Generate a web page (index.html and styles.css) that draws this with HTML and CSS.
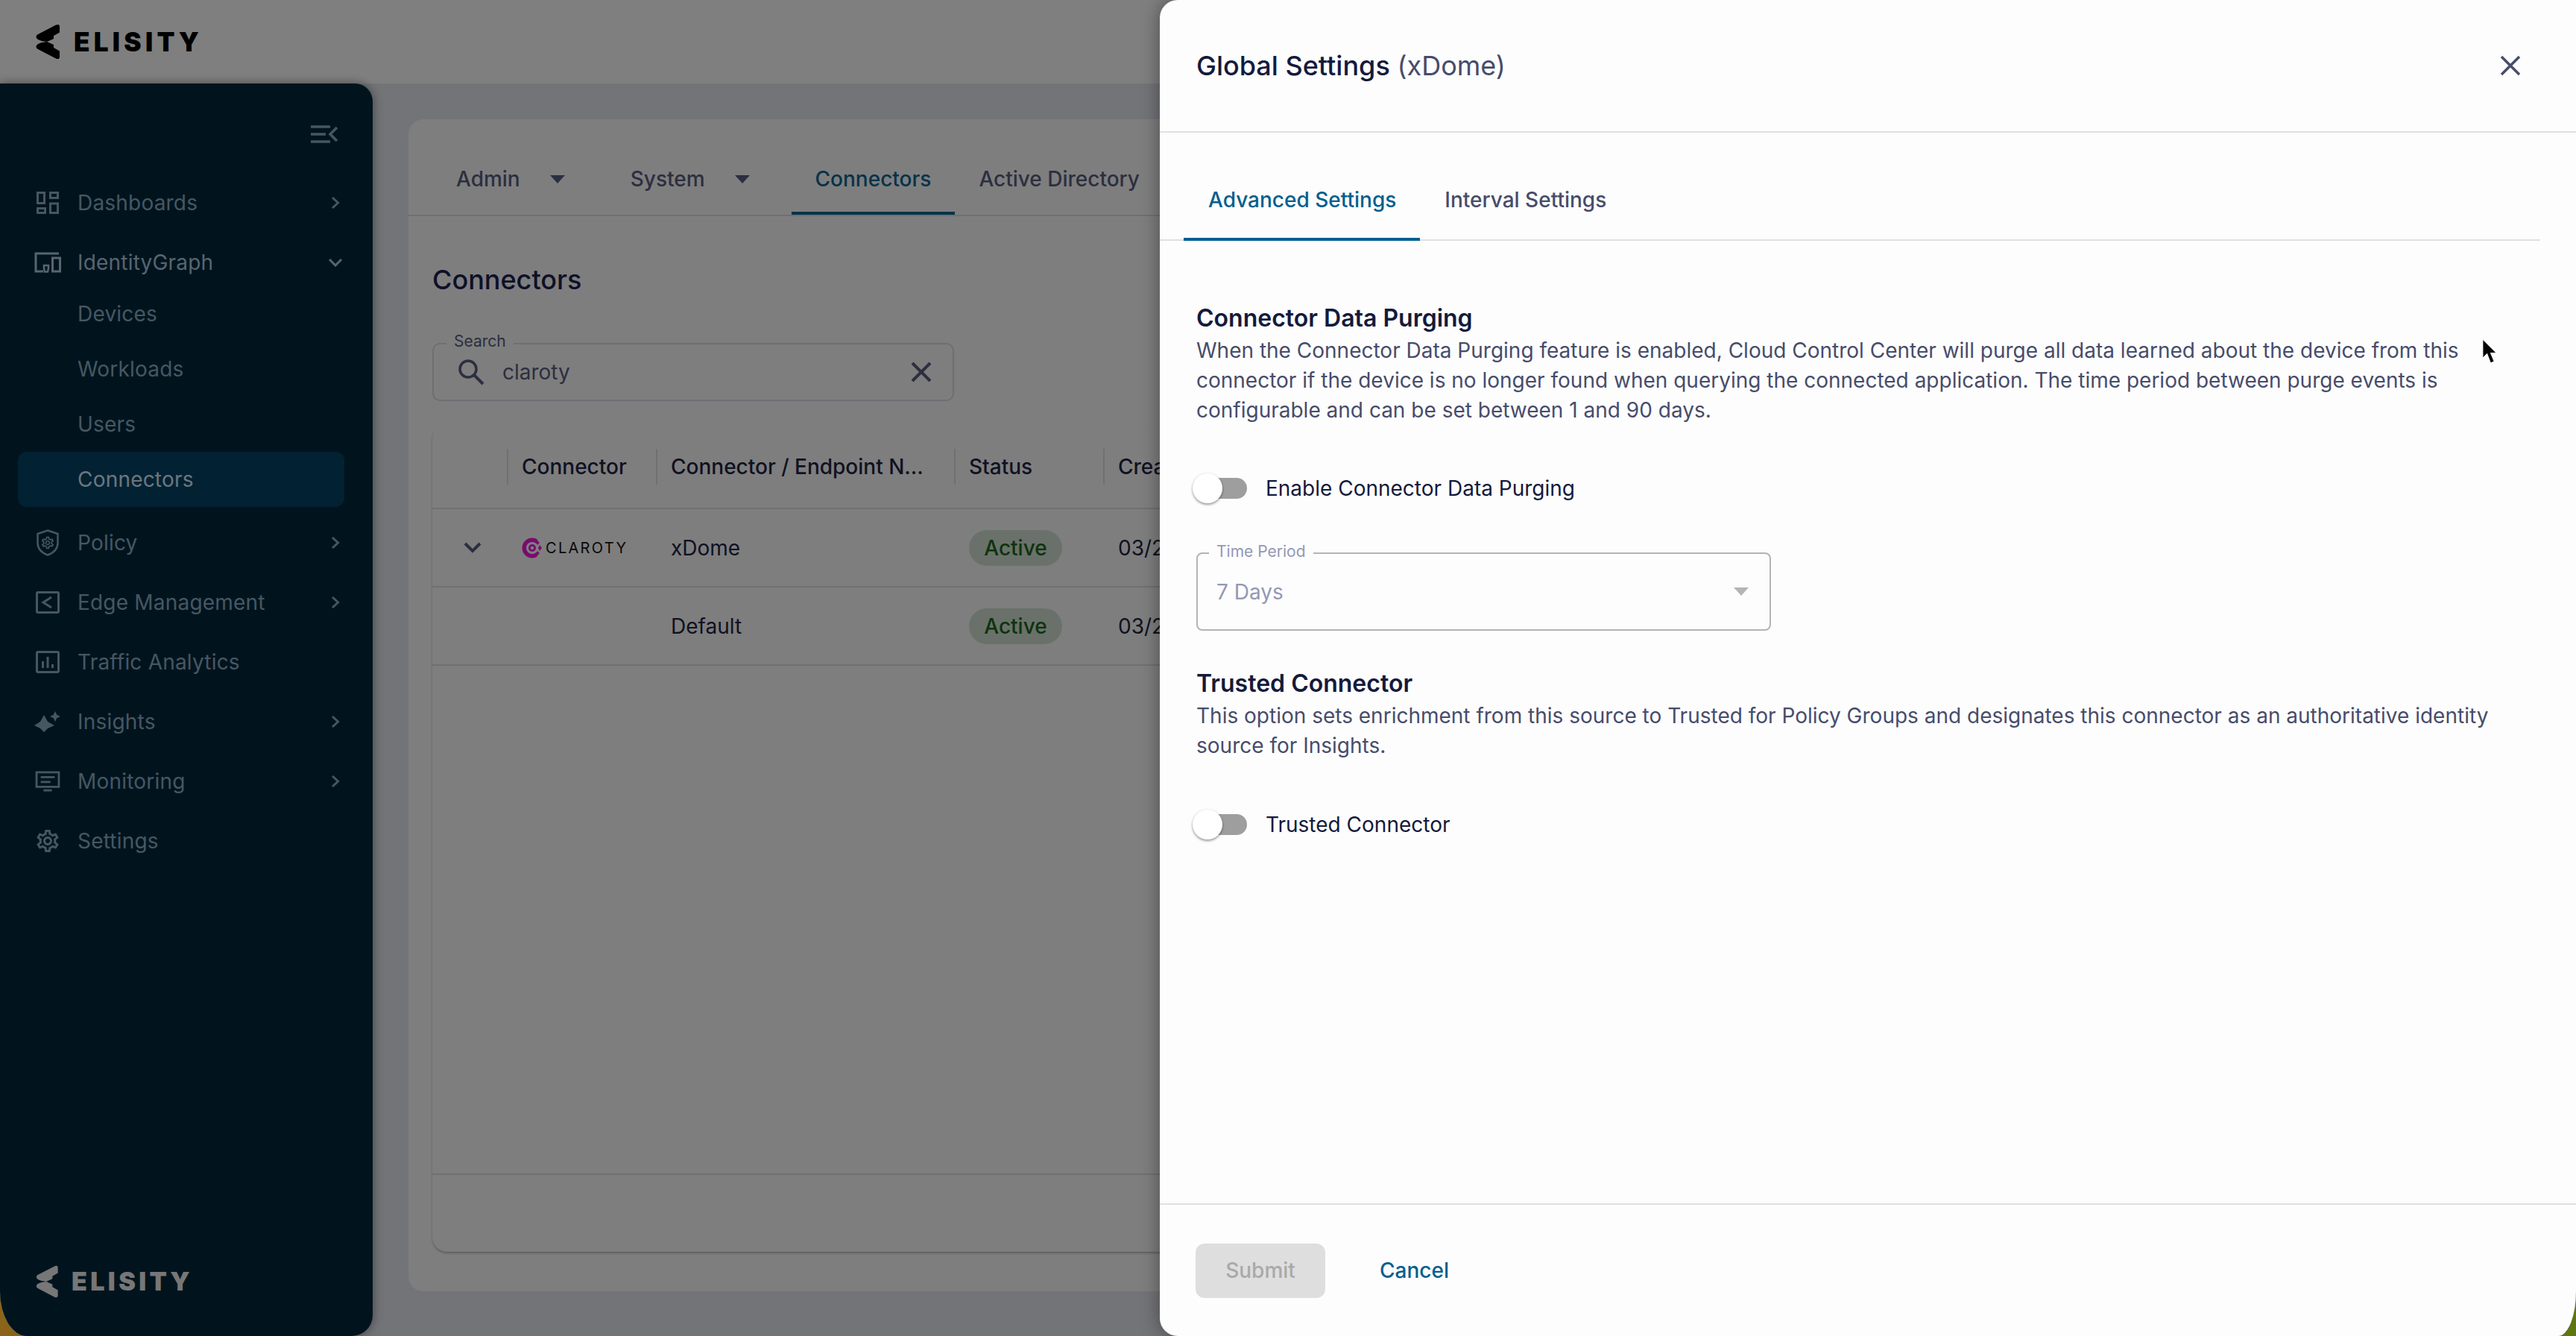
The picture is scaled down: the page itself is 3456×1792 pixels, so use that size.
FILE: index.html
```html
<!DOCTYPE html>
<html lang="en">

<head>
    <meta charset="UTF-8">
    <title>Connectors - Global Settings</title>
    <link rel="stylesheet" href="styles.css">
</head>

<body>
    <svg class="defs" aria-hidden="true">
        <symbol id="logo-mark" viewBox="0 0 32 48">
            <path d="M27 1.500Q32-.5 32 4v7.500L24 16v4l-9 4-7-1-5-2q-4.500-3-1-6.500z" fill="currentColor"/>
            <path d="M3 27l5-2 7-1 9 4v4l8 4.500V44q0 4.500-5 2.500L2 33.500Q-1.500 30 3 27z" fill="currentColor"/>
        </symbol>
        <symbol id="chev-right" viewBox="0 0 12 18">
            <path d="M2 2l7.500 7L2 16" fill="none" stroke="currentColor" stroke-width="3"/>
        </symbol>
        <symbol id="gear" viewBox="0 0 24 24">
            <path fill="currentColor" d="M19.430 12.980c.04-.32.07-.64.07-.98 0-.34-.03-.66-.07-.98l2.110-1.650c.19-.15.24-.42.12-.64l-2-3.460c-.09-.16-.26-.25-.44-.25-.06 0-.12.01-.17.03l-2.490 1c-.52-.4-1.080-.73-1.690-.98l-.38-2.650C14.460 2.180 14.250 2 14 2h-4c-.25 0-.46.18-.49.42l-.38 2.650c-.61.25-1.170.59-1.690.98l-2.490-1c-.06-.02-.12-.03-.18-.03-.17 0-.34.09-.43.25l-2 3.460c-.13.22-.07.49.12.64l2.110 1.650c-.04.32-.07.65-.07.98 0 .33.03.66.07.98l-2.110 1.650c-.19.15-.24.42-.12.64l2 3.460c.09.16.26.25.44.25.06 0 .12-.01.17-.03l2.490-1c.52.4 1.080.73 1.690.98l.38 2.650c.03.24.24.42.49.42h4c.25 0 .46-.18.49-.42l.38-2.650c.61-.25 1.170-.59 1.690-.98l2.490 1c.06.02.12.03.18.03.17 0 .34-.09.43-.25l2-3.460c.12-.22.07-.49-.12-.64l-2.110-1.650zm-1.980-1.710c.04.31.05.52.05.73 0 .21-.02.43-.05.73l-.14 1.130.89.7 1.080.84-.7 1.210-1.270-.51-1.040-.42-.9.68c-.43.32-.84.56-1.250.73l-1.060.43-.16 1.130-.2 1.350h-1.400l-.19-1.350-.16-1.130-1.060-.43c-.43-.18-.83-.41-1.230-.71l-.91-.7-1.060.43-1.270.51-.7-1.210 1.080-.84.89-.7-.14-1.130c-.03-.31-.05-.54-.05-.74s.02-.43.05-.73l.14-1.130-.89-.7-1.080-.84.7-1.210 1.270.51 1.040.42.9-.68c.43-.32.84-.56 1.250-.73l1.060-.43.16-1.130.2-1.350h1.390l.19 1.350.16 1.130 1.060.43c.43.18.83.41 1.230.71l.91.7 1.060-.43 1.270-.51.7 1.210-1.070.85-.89.7.14 1.130zM12 8c-2.210 0-4 1.790-4 4s1.790 4 4 4 4-1.790 4-4-1.790-4-4-4zm0 6c-1.100 0-2-.9-2-2s.9-2 2-2 2 .9 2 2-.9 2-2 2z"/>
        </symbol>
    </svg>

    <div class="app">
        <header class="topbar">
            <div class="brand brand-top">
                <svg class="brand-mark"><use href="#logo-mark"/></svg>
                <span class="brand-name">ELISITY</span>
            </div>
        </header>

        <div class="workspace">
            <!-- Sidebar -->
            <aside class="sidebar">
                <div class="collapse-row">
                    <svg class="collapse-icon" viewBox="0 0 36 24">
                        <path d="M0 2h26M0 12h20M0 22h26M35 3 26 12l9 9" fill="none" stroke="currentColor" stroke-width="3.500"/>
                    </svg>
                </div>

                <nav class="nav">
                    <a class="nav-item">
                        <span class="nav-icon">
                            <svg class="icon-30" viewBox="0 0 30 30"><path d="M1.500 1.500h9v14h-9zM18.500 1.500h10v7h-10zM1.500 22.500h10v6h-10zM18.500 16h10v12.500h-10z" fill="none" stroke="currentColor" stroke-width="3"/></svg>
                        </span>
                        <span class="nav-label">Dashboards</span>
                        <svg class="nav-chev"><use href="#chev-right"/></svg>
                    </a>
                    <a class="nav-item nav-open">
                        <span class="nav-icon">
                            <svg class="icon-36" viewBox="0 0 36 28"><path d="M33 2H2v24h10M24.500 8h10v18h-10z" fill="none" stroke="currentColor" stroke-width="3"/><path d="M13 18h6v4l-1 4.500h-4l-1-4.500z" fill="none" stroke="currentColor" stroke-width="2.500"/></svg>
                        </span>
                        <span class="nav-label">IdentityGraph</span>
                        <svg class="nav-chev-down" viewBox="0 0 18 11"><path d="M1 1l8 8 8-8" fill="none" stroke="currentColor" stroke-width="3"/></svg>
                    </a>
                    <div class="nav-sub">
                        <a class="sub-item">Devices</a>
                        <a class="sub-item">Workloads</a>
                        <a class="sub-item">Users</a>
                        <a class="sub-item sub-active">Connectors</a>
                    </div>
                    <a class="nav-item">
                        <span class="nav-icon">
                            <svg class="icon-shield" viewBox="0 0 30 36">
                                <path d="M15 1.500 28.500 6v12c0 8-5.500 13.500-13.500 16.500C7 31.500 1.500 26 1.500 18V6z" fill="none" stroke="currentColor" stroke-width="2.500"/>
                                <use href="#gear" x="5" y="8" width="20" height="20"/>
                            </svg>
                        </span>
                        <span class="nav-label">Policy</span>
                        <svg class="nav-chev"><use href="#chev-right"/></svg>
                    </a>
                    <a class="nav-item">
                        <span class="nav-icon">
                            <svg class="icon-32" viewBox="0 0 32 30">
                                <rect x="1.500" y="1.500" width="29" height="27" rx="1.500" fill="none" stroke="currentColor" stroke-width="3"/>
                                <path d="M21 8l-11 7 11 7" fill="none" stroke="currentColor" stroke-width="3"/>
                            </svg>
                        </span>
                        <span class="nav-label">Edge Management</span>
                        <svg class="nav-chev"><use href="#chev-right"/></svg>
                    </a>
                    <a class="nav-item">
                        <span class="nav-icon">
                            <svg class="icon-32" viewBox="0 0 32 30">
                                <rect x="1.500" y="1.500" width="29" height="27" rx="1.500" fill="none" stroke="currentColor" stroke-width="3"/>
                                <path d="M9.500 14v9M16 8v15M22.500 18v5" fill="none" stroke="currentColor" stroke-width="3"/>
                            </svg>
                        </span>
                        <span class="nav-label">Traffic Analytics</span>
                    </a>
                    <a class="nav-item">
                        <span class="nav-icon">
                            <svg class="icon-36" viewBox="0 0 36 28">
                                <path d="M13 5l5 9 9 5-9 4-5 5-5-5-8-4 8-5zM28 0l2.200 4.800L35 7l-4.800 2.200L28 14l-2.200-4.800L21 7l4.800-2.200z" fill="currentColor"/>
                            </svg>
                        </span>
                        <span class="nav-label">Insights</span>
                        <svg class="nav-chev"><use href="#chev-right"/></svg>
                    </a>
                    <a class="nav-item">
                        <span class="nav-icon">
                            <svg class="icon-36" viewBox="0 0 36 30">
                                <path d="M2 2h32v21H2zM12 28h12M8 9h20M8 16h14" fill="none" stroke="currentColor" stroke-width="3"/>
                            </svg>
                        </span>
                        <span class="nav-label">Monitoring</span>
                        <svg class="nav-chev"><use href="#chev-right"/></svg>
                    </a>
                    <a class="nav-item">
                        <span class="nav-icon">
                            <svg class="icon-gear"><use href="#gear"/></svg>
                        </span>
                        <span class="nav-label">Settings</span>
                    </a>
                </nav>

                <div class="brand brand-bottom">
                    <svg class="brand-mark"><use href="#logo-mark"/></svg>
                    <span class="brand-name">ELISITY</span>
                </div>
            </aside>

            <!-- Connectors page -->
            <main class="page">
                <div class="card">
                    <div class="page-tabs">
                        <a class="page-tab tab-menu">Admin<i class="caret"></i></a>
                        <a class="page-tab tab-menu">System<i class="caret"></i></a>
                        <a class="page-tab page-tab-active">Connectors</a>
                        <a class="page-tab">Active Directory</a>
                    </div>

                    <div class="card-body">
                        <h2 class="page-title">Connectors</h2>

                        <div class="search">
                            <span class="search-label">Search</span>
                            <svg class="search-icon" viewBox="0 0 36 36">
                                <circle cx="14" cy="14" r="11" fill="none" stroke="currentColor" stroke-width="3.500"/>
                                <path d="M22 22l12 12" fill="none" stroke="currentColor" stroke-width="4"/>
                            </svg>
                            <span class="search-value">claroty</span>
                            <svg class="search-clear" viewBox="0 0 28 28">
                                <path d="M2 2l24 24M26 2 2 26" fill="none" stroke="currentColor" stroke-width="4"/>
                            </svg>
                        </div>

                        <div class="table">
                            <div class="table-row table-head">
                                <div class="cell"></div>
                                <div class="cell"><span class="head-cell">Connector</span></div>
                                <div class="cell"><span class="head-cell">Connector / Endpoint N...</span></div>
                                <div class="cell"><span class="head-cell">Status</span></div>
                                <div class="cell"><span class="head-cell">Created</span></div>
                            </div>
                            <div class="table-row">
                                <div class="cell cell-toggle">
                                    <svg class="row-chev" viewBox="0 0 24 15"><path d="M2 2l10 10L22 2" fill="none" stroke="currentColor" stroke-width="4"/></svg>
                                </div>
                                <div class="cell cell-pad claroty">
                                    <svg class="claroty-mark" viewBox="0 0 28 28">
                                        <circle cx="14" cy="14" r="13.500" fill="currentColor"/>
                                        <circle cx="14" cy="14" r="8" fill="#fff"/>
                                        <circle cx="14" cy="14" r="5" fill="currentColor"/>
                                        <circle cx="14" cy="14" r="2.200" fill="#fff"/>
                                        <path d="M20 2l2 3-3 8 3 1-3 1 3 8-2 3h8V2z" fill="#fff"/>
                                        <path d="M19 3l5 4-3 3zM24 10l3 4-3 4-2-4zM21 18l3 3-5 4z" fill="currentColor"/>
                                    </svg>
                                    <span class="claroty-name">CLAROTY</span>
                                </div>
                                <div class="cell cell-pad">xDome</div>
                                <div class="cell cell-pad"><span class="chip">Active</span></div>
                                <div class="cell cell-pad">03/2</div>
                            </div>
                            <div class="table-row">
                                <div class="cell"></div>
                                <div class="cell"></div>
                                <div class="cell cell-pad">Default</div>
                                <div class="cell cell-pad"><span class="chip">Active</span></div>
                                <div class="cell cell-pad">03/2</div>
                            </div>
                            <div class="table-foot"></div>
                        </div>
                    </div>
                </div>
            </main>
        </div>

        <div class="scrim"></div>

        <!-- Global settings drawer -->
        <section class="drawer">
            <div class="drawer-head">
                <h1 class="drawer-title">Global Settings <span class="drawer-sub">(xDome)</span></h1>
                <svg class="drawer-close" viewBox="0 0 28 28">
                    <path d="M2 2l24 24M26 2 2 26" fill="none" stroke="currentColor" stroke-width="3.500"/>
                </svg>
            </div>

            <div class="drawer-tabs">
                <a class="drawer-tab drawer-tab-active">Advanced Settings</a>
                <a class="drawer-tab">Interval Settings</a>
            </div>

            <div class="drawer-body">
                <h3 class="section-title">Connector Data Purging</h3>
                <p class="section-text">When the Connector Data Purging feature is enabled, Cloud Control Center will purge all data learned about the device from this connector if the device is no longer found when querying the connected application. The time period between purge events is configurable and can be set between 1 and 90 days.</p>

                <label class="switch-row">
                    <span class="switch"><span class="switch-knob"></span></span>
                    <span class="switch-label">Enable Connector Data Purging</span>
                </label>

                <div class="select">
                    <span class="select-label">Time Period</span>
                    <span class="select-value">7 Days</span>
                    <i class="select-caret"></i>
                </div>

                <h3 class="section-title section-second">Trusted Connector</h3>
                <p class="section-text">This option sets enrichment from this source to Trusted for Policy Groups and designates this connector as an authoritative identity source for Insights.</p>

                <label class="switch-row switch-last">
                    <span class="switch"><span class="switch-knob"></span></span>
                    <span class="switch-label">Trusted Connector</span>
                </label>
            </div>

            <div class="drawer-foot">
                <button class="btn-submit" disabled>Submit</button>
                <button class="btn-cancel">Cancel</button>
            </div>
        </section>

        <svg class="cursor" viewBox="0 0 22 36">
            <path d="M2 1v26l6-6 5 13 5-2-5-12h8z" fill="#000" stroke="#fff" stroke-width="1"/>
        </svg>
    </div>
</body>

</html>
```

FILE: styles.css
```css
* {
    margin: 0;
    padding: 0;
    box-sizing: border-box;
}

html {
    height: 100%;
    background: linear-gradient(90deg, #8a6418 0%, #8a6418 50%, #5f7510 50%, #5f7510 100%);
}

body {
    height: 100%;
    font-family: 'Inter', 'Liberation Sans', sans-serif;
    font-size: 28px;
    color: #474c6b;
    overflow: hidden;
}

.defs {
    position: absolute;
    width: 0;
    height: 0;
}

.app {
    position: relative;
    height: 100vh;
    display: flex;
    flex-direction: column;
    background: #e6e8f0;
    overflow: hidden;
    border-radius: 0 0 24px 36px / 0 0 60px 60px;
}

/* Top bar */
.topbar {
    height: 112px;
    flex: none;
    display: flex;
    align-items: center;
    padding-left: 48px;
    background: #fff;
}

.brand {
    display: flex;
    align-items: center;
}

.brand-top {
    color: #000;
}

.brand-mark {
    width: 32px;
    height: 48px;
    flex: none;
}

.brand-name {
    font-weight: 900;
    font-size: 35px;
    line-height: 1;
    letter-spacing: 5.3px;
}

.brand-top .brand-name {
    margin-left: 19px;
}

.brand-bottom {
    margin-top: auto;
    margin-left: 48px;
    margin-bottom: 51px;
    color: #efefef;
}

.brand-bottom .brand-mark {
    width: 30px;
    height: 44px;
}

.brand-bottom .brand-name {
    font-size: 34px;
    letter-spacing: 4.4px;
    margin-left: 18px;
}

.workspace {
    flex: 1;
    display: flex;
    min-height: 0;
}

/* Sidebar */
.sidebar {
    width: 500px;
    flex: none;
    display: flex;
    flex-direction: column;
    padding-top: 56px;
    background: #02283c;
    color: #8daec4;
    letter-spacing: 0.2px;
    border-radius: 0 24px 28px 0;
    box-shadow: 0 0 14px rgba(0, 0, 0, 0.45);
    z-index: 1;
}

.collapse-row {
    height: 24px;
    margin-bottom: 46px;
    display: flex;
    justify-content: flex-end;
    padding-right: 47px;
}

.collapse-icon {
    width: 36px;
    height: 24px;
}

.nav {
    display: flex;
    flex-direction: column;
}

.nav-item {
    height: 68px;
    margin-bottom: 12px;
    display: flex;
    align-items: center;
    padding-left: 46px;
    position: relative;
}

.nav-open {
    color: #aecae0;
}

.nav-icon {
    width: 36px;
    height: 36px;
    flex: none;
    display: flex;
    align-items: center;
    justify-content: center;
}

.nav-label {
    margin-left: 22px;
}

.icon-30 {
    width: 30px;
    height: 30px;
}

.icon-32 {
    width: 32px;
    height: 30px;
}

.icon-36 {
    width: 36px;
    height: 28px;
}

.icon-shield {
    width: 30px;
    height: 36px;
}

.icon-gear {
    width: 38px;
    height: 38px;
}

.nav-chev {
    width: 12px;
    height: 18px;
    margin-left: auto;
    margin-right: 44px;
}

.nav-chev-down {
    width: 18px;
    height: 11px;
    margin-left: auto;
    margin-right: 41px;
}

.nav-sub {
    margin: -14px 0 14px;
    display: flex;
    flex-direction: column;
}

.sub-item {
    height: 74px;
    margin: 0 38px 0 24px;
    padding-left: 80px;
    display: flex;
    align-items: center;
    border-radius: 12px;
}

.sub-active {
    background: #044266;
    color: #d8ecfa;
}

/* Connectors page */
.page {
    flex: 1;
    min-width: 0;
    padding: 48px 48px 60px;
    display: flex;
}

.card {
    flex: 1;
    display: flex;
    flex-direction: column;
    background: #fcfcfc;
    border-radius: 20px;
    color: #585e80;
}

.page-tabs {
    height: 130px;
    padding: 32px 32px 0;
    display: flex;
    flex: none;
    border-bottom: 2px solid #e0e0e0;
}

.page-tab {
    height: 96px;
    padding: 0 32px;
    display: flex;
    align-items: center;
    font-weight: 500;
}

.tab-menu {
    padding-right: 56px;
}

.caret {
    width: 0;
    height: 0;
    margin-left: 40px;
    border-left: 10px solid transparent;
    border-right: 10px solid transparent;
    border-top: 11px solid currentColor;
}

.page-tab-active {
    color: #0c6692;
    padding-top: 4px;
    border-bottom: 4px solid #0c6692;
}

.card-body {
    flex: 1;
    min-height: 0;
    display: flex;
    flex-direction: column;
    padding: 63px 32px 53px;
}

.page-title {
    font-size: 36px;
    line-height: 44px;
    font-weight: 500;
    color: #1a2250;
    margin-bottom: 63px;
}

.search {
    position: relative;
    width: 700px;
    height: 78px;
    flex: none;
    display: flex;
    align-items: center;
    padding: 0 28px 0 32px;
    border: 2px solid #dcdce8;
    border-radius: 10px;
}

.search-label {
    position: absolute;
    top: -16px;
    left: 17px;
    padding: 0 10px;
    background: #fcfcfc;
    font-size: 21px;
    line-height: 24px;
    color: #585e80;
}

.search-icon {
    width: 36px;
    height: 36px;
    flex: none;
}

.search-value {
    margin-left: 24px;
}

.search-clear {
    width: 28px;
    height: 28px;
    margin-left: auto;
}

.table {
    flex: 1;
    margin-top: 32px;
    display: flex;
    flex-direction: column;
    border-radius: 20px;
    background: #fcfcfc;
    box-shadow: 0 2px 3px rgba(0, 0, 0, 0.25);
    color: #1e2444;
}

.table-row {
    height: 105px;
    flex: none;
    display: grid;
    grid-template-columns: 100px 200px 400px 200px 1fr;
    border-bottom: 2px solid #e0e0e0;
    align-items: center;
}

.table-head {
    height: 113px;
    font-weight: 500;
}

.cell {
    display: flex;
    align-items: center;
    white-space: nowrap;
}

.cell-pad {
    padding-left: 20px;
}

.cell-toggle {
    justify-content: center;
    padding-left: 8px;
    color: #585e80;
}

.head-cell {
    width: 100%;
    height: 48px;
    display: flex;
    align-items: center;
    padding-left: 18px;
    border-left: 2px solid #e0e0e0;
}

.row-chev {
    width: 24px;
    height: 15px;
}

.claroty {
    color: #f018dc;
}

.claroty-mark {
    width: 28px;
    height: 28px;
    flex: none;
}

.claroty-name {
    margin-left: 4px;
    font-size: 20px;
    line-height: 1;
    letter-spacing: 2.3px;
    color: #111;
}

.chip {
    height: 48px;
    width: 125px;
    display: flex;
    align-items: center;
    justify-content: center;
    border-radius: 24px;
    background: #d4e2d4;
    color: #1d661d;
    font-weight: 500;
}

.table-foot {
    margin-top: auto;
    height: 105px;
    border-top: 2px solid #e0e0e0;
}

/* Drawer */
.scrim {
    position: absolute;
    top: 0;
    right: 0;
    bottom: 0;
    left: 0;
    background: rgba(0, 0, 0, 0.5);
    z-index: 2;
}

.drawer {
    position: absolute;
    top: 0;
    right: 0;
    bottom: 0;
    width: 1900px;
    display: flex;
    flex-direction: column;
    background: #fdfdfd;
    border-radius: 24px 0 0 24px;
    box-shadow: 0 0 26px rgba(0, 0, 0, 0.4);
    z-index: 3;
}

.drawer-head {
    height: 178px;
    flex: none;
    display: flex;
    align-items: center;
    justify-content: space-between;
    padding: 0 74px 0 49px;
    border-bottom: 2px solid #e0e0e0;
}

.drawer-title {
    font-size: 36px;
    font-weight: 500;
    color: #141a3c;
}

.drawer-sub {
    font-weight: 400;
    color: #474c6b;
}

.drawer-close {
    width: 28px;
    height: 28px;
}

.drawer-tabs {
    height: 145px;
    flex: none;
    display: flex;
    align-items: flex-end;
    margin-right: 48px;
    padding-left: 32px;
    border-bottom: 2px solid #e0e0e0;
}

.drawer-tab {
    height: 110px;
    padding: 0 32px 0 33px;
    display: flex;
    align-items: center;
    font-weight: 500;
    margin-bottom: -2px;
}

.drawer-tab-active {
    color: #045f8e;
    padding-top: 4px;
    border-bottom: 4px solid #045f8e;
}

.drawer-body {
    flex: 1;
    min-height: 0;
    padding: 84px 106px 0 49px;
}

.section-title {
    font-size: 32px;
    line-height: 40px;
    font-weight: 600;
    color: #141a3c;
    margin-bottom: 3px;
}

.section-second {
    margin-top: 51px;
}

.section-text {
    line-height: 40px;
}

.switch-row {
    height: 40px;
    margin-top: 65px;
    margin-left: -5px;
    display: flex;
    align-items: center;
}

.switch-last {
    margin-top: 66px;
}

.switch {
    position: relative;
    width: 73px;
    height: 28px;
    flex: none;
}

.switch::before {
    content: "";
    position: absolute;
    left: 5px;
    right: 0;
    top: 0;
    bottom: 0;
    background: #9e9e9e;
    border-radius: 14px;
}

.switch-knob {
    position: absolute;
    left: 0;
    top: -6px;
    width: 40px;
    height: 40px;
    border-radius: 50%;
    background: #fff;
    box-shadow: 0 2px 3px rgba(0, 0, 0, 0.3), 0 1px 4px rgba(0, 0, 0, 0.15);
}

.switch-label {
    margin-left: 25px;
    color: #141a3c;
}

.select {
    position: relative;
    width: 771px;
    height: 105px;
    margin-top: 66px;
    display: flex;
    align-items: center;
    padding: 0 32px 0 25px;
    border: 2px solid #b4b4b4;
    border-radius: 8px;
}

.select-label {
    position: absolute;
    top: -15px;
    left: 15px;
    padding: 0 10px;
    background: #fdfdfd;
    font-size: 21px;
    line-height: 24px;
    color: #9398b6;
}

.select-value {
    color: #9398b6;
}

.select-caret {
    width: 0;
    height: 0;
    margin-left: auto;
    margin-right: -4px;
    border-left: 10px solid transparent;
    border-right: 10px solid transparent;
    border-top: 11px solid #b4b4b4;
}

.drawer-foot {
    height: 178px;
    flex: none;
    display: flex;
    align-items: center;
    gap: 41px;
    padding-left: 48px;
    border-top: 2px solid #e0e0e0;
}

.btn-submit,
.btn-cancel {
    font-family: inherit;
    font-size: 28px;
    font-weight: 500;
    border: 0;
    background: none;
}

.btn-submit {
    width: 174px;
    height: 73px;
    border-radius: 12px;
    background: #dedede;
    color: #a9a9a9;
}

.btn-cancel {
    padding: 0 32px;
    height: 73px;
    color: #045f8e;
}

.cursor {
    position: absolute;
    left: 3329px;
    top: 454px;
    width: 21px;
    height: 35px;
    z-index: 4;
}
```
